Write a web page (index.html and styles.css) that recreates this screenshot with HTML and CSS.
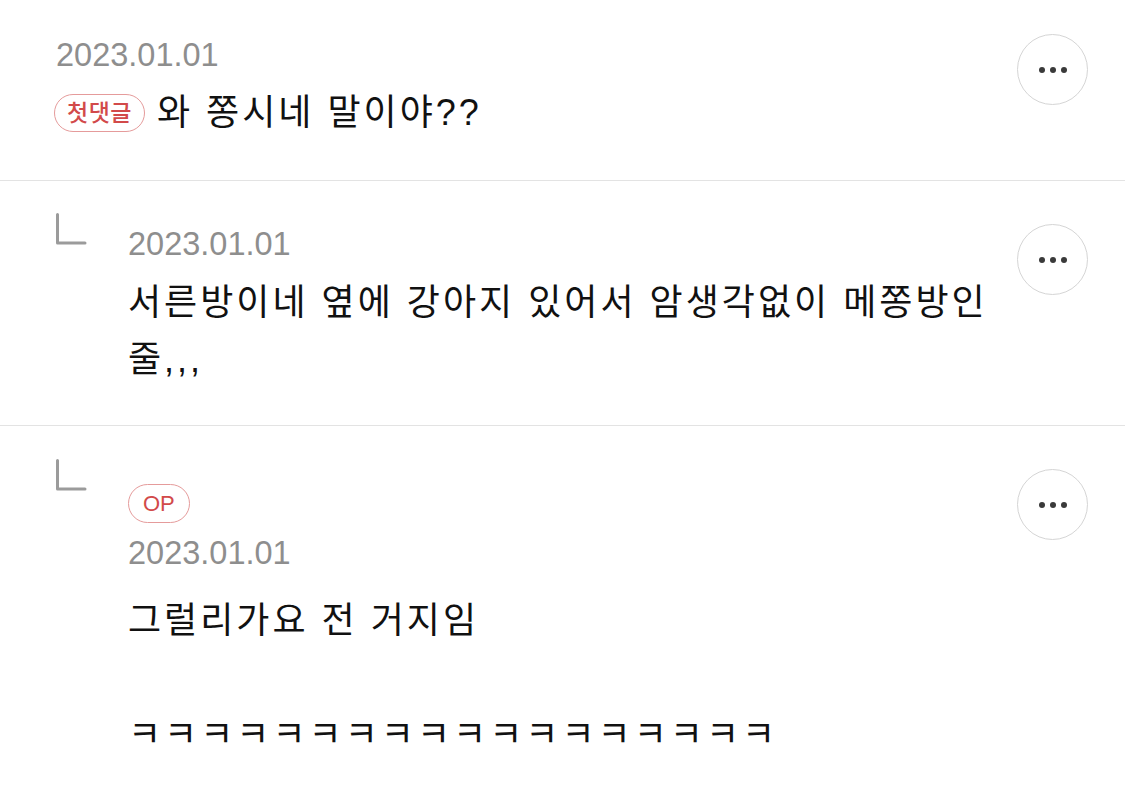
FILE: index.html
```html
<!DOCTYPE html>
<html lang="ko">
<head>
<meta charset="utf-8">
<link rel="stylesheet" href="styles.css">
</head>
<body>
<div class="list">
  <div class="comment first">
    <div class="body">
      <div class="date">2023.01.01</div>
      <div class="row">
        <span class="badge">첫댓글</span>
        <span class="text">와 쫑시네 말이야??</span>
      </div>
    </div>
    <button class="more" aria-label="더보기"><span class="dot"></span><span class="dot"></span><span class="dot"></span></button>
  </div>

  <div class="comment reply r2">
    <svg class="reply-icon" width="32" height="32" viewBox="0 0 32 32"><path d="M1.5 1.5 V30 H29" fill="none" stroke="#9b9b9b" stroke-width="3" stroke-linecap="round" stroke-linejoin="round"/></svg>
    <div class="body">
      <div class="date">2023.01.01</div>
      <div class="text block">서른방이네 옆에 강아지 있어서 암생각없이 메쫑방인 줄,,,</div>
    </div>
    <button class="more" aria-label="더보기"><span class="dot"></span><span class="dot"></span><span class="dot"></span></button>
  </div>

  <div class="comment reply r3">
    <svg class="reply-icon" width="32" height="32" viewBox="0 0 32 32"><path d="M1.5 1.5 V30 H29" fill="none" stroke="#9b9b9b" stroke-width="3" stroke-linecap="round" stroke-linejoin="round"/></svg>
    <div class="body">
      <span class="badge op">OP</span>
      <div class="date">2023.01.01</div>
      <div class="text block">그럴리가요 전 거지임<br><br>ㅋㅋㅋㅋㅋㅋㅋㅋㅋㅋㅋㅋㅋㅋㅋㅋㅋㅋ</div>
    </div>
    <button class="more" aria-label="더보기"><span class="dot"></span><span class="dot"></span><span class="dot"></span></button>
  </div>
</div>
</body>
</html>
```

FILE: styles.css
```css
html, body {
  margin: 0;
  padding: 0;
  background: #ffffff;
}

body {
  font-family: "Liberation Sans", "Noto Sans CJK KR", sans-serif;
  color: #111111;
  width: 1125px;
  height: 786px;
  overflow: hidden;
}

.comment {
  display: flex;
  align-items: flex-start;
  padding: 34px 37px 0 56px;
  border-bottom: 1px solid #e3e3e3;
}

.comment.first {
  padding-bottom: 45px;
}

.comment.r2 {
  padding-top: 32px;
  padding-bottom: 37px;
}

.comment.r3 {
  padding-top: 33px;
  border-bottom: none;
}

.reply-icon {
  flex: 0 0 auto;
  display: block;
  margin-right: 40px;
}

.body {
  flex: 1 1 auto;
  min-width: 0;
}

.date {
  font-family: "Liberation Sans", sans-serif;
  font-size: 32.5px;
  line-height: 40px;
  color: #8e8e8e;
  margin-top: 1px;
}

.r2 .date {
  margin-top: 11px;
}

.r3 .date {
  margin-top: 10px;
}

.row {
  display: flex;
  align-items: center;
  margin-top: 16px;
  height: 44px;
}

.badge {
  display: inline-flex;
  align-items: center;
  justify-content: center;
  box-sizing: border-box;
  height: 38px;
  padding: 0 12px;
  border: 1.5px solid #e59b9b;
  border-radius: 20px;
  color: #d24a4a;
  font-family: "Liberation Sans", "Noto Sans CJK KR", sans-serif;
  font-size: 23px;
  font-weight: 500;
  line-height: 1;
  flex: 0 0 auto;
  letter-spacing: 0.5px;
}

.badge.op {
  height: 39px;
  margin-top: 25px;
  padding: 0 14px;
  font-size: 22px;
  font-weight: 400;
  letter-spacing: 0;
}

.row .badge {
  margin-left: -2px;
  margin-right: 12px;
}

.text {
  font-size: 36px;
  line-height: 44px;
  letter-spacing: 3px;
  color: #111111;
}

.text.block {
  line-height: 57px;
  margin-top: 10px;
}

.r3 .text.block {
  margin-top: 19px;
}

.more {
  flex: 0 0 auto;
  width: 71px;
  height: 71px;
  box-sizing: border-box;
  border: 1.5px solid #d5d5d5;
  border-radius: 50%;
  background: #ffffff;
  display: flex;
  align-items: center;
  justify-content: center;
  gap: 5px;
  padding: 0;
  margin-left: 24px;
}

.r2 .more {
  margin-top: 11px;
}

.r3 .more {
  margin-top: 10px;
}

.dot {
  width: 6px;
  height: 6px;
  border-radius: 50%;
  background: #3a3a3a;
}
```
